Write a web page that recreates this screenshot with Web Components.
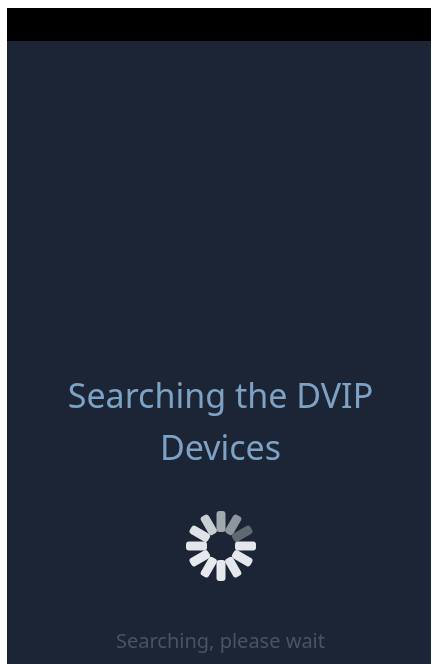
<!DOCTYPE html>
<html>
<head>
<meta charset="utf-8">
<title>Searching</title>
<style>
html, body { height: 100%; }
body { margin: 0; background: #fff; overflow: hidden; }
</style>
</head>
<body>
<search-screen>
  <span slot="title">Searching the DVIP<br>Devices</span>
  <span slot="hint">Searching, please wait</span>
</search-screen>

<script>
class LoadSpinner extends HTMLElement {
  connectedCallback() {
    const colors = ['#a0a8b0', '#8f959d', '#5f6972', '#e4e7ec', '#e4e7ec', '#e4e7ec',
      '#e6e9ee', '#e6e9ee', '#e6e9ee', '#e2e5ea', '#dfe3e8', '#c9ced5'];
    let spokes = '';
    colors.forEach((c, i) => {
      spokes += `<rect x="-4.5" y="-35" width="9" height="21" rx="3" fill="${c}" transform="rotate(${i * 30})"/>`;
    });
    this.attachShadow({ mode: 'open' }).innerHTML = `
      <style>
        :host { display: block; width: 72px; height: 72px; }
        svg { display: block; filter: blur(.7px); }
      </style>
      <svg width="72" height="72" viewBox="-36 -36 72 72">${spokes}</svg>`;
  }
}
customElements.define('load-spinner', LoadSpinner);

const screenTemplate = document.createElement('template');
screenTemplate.innerHTML = `
<style>
:host {
  display: flex;
  flex-direction: column;
  box-sizing: border-box;
  height: 664px;
  padding: 8px 4px 0 7px;
  font-family: "Noto Sans", "Open Sans", sans-serif;
}
.bar { height: 33px; background: #000; flex: none; }
.body {
  flex: 1;
  display: flex;
  flex-direction: column;
  align-items: center;
  background: #1c2536;
  padding: 328px 0 0 3px;
}
.title {
  font-size: 34px;
  line-height: 52px;
  color: #7ea2c3;
  text-align: center;
  filter: blur(.5px);
}
load-spinner { margin-top: 37px; }
.hint {
  margin-top: 45px;
  font-size: 20px;
  line-height: 28px;
  color: #485365;
  filter: blur(.6px);
}
</style>
<div class="bar"></div>
<div class="body">
  <div class="title"><slot name="title"></slot></div>
  <load-spinner></load-spinner>
  <div class="hint"><slot name="hint"></slot></div>
</div>`;

class SearchScreen extends HTMLElement {
  constructor() {
    super();
    this.attachShadow({ mode: 'open' }).appendChild(screenTemplate.content.cloneNode(true));
  }
}
customElements.define('search-screen', SearchScreen);
</script>
</body>
</html>
